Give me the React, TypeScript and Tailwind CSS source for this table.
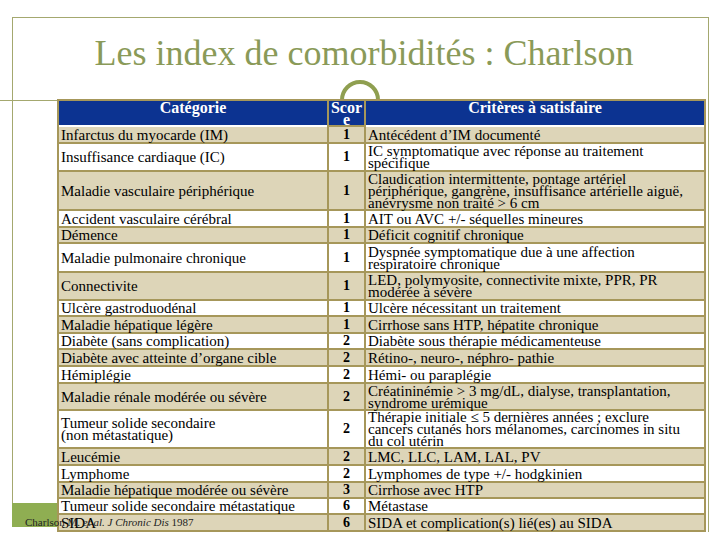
import React from "react";

type Row = {
  cat: string[];
  score: string;
  crit: string[];
  h: string;
  bg: string;
};

const beige = "bg-[#ddd5b8]";
const white = "bg-white";

const rows: Row[] = [
  { cat: ["Infarctus du myocarde (IM)"], score: "1", crit: ["Antécédent d’IM documenté"], h: "h-[15px]", bg: beige },
  { cat: ["Insuffisance cardiaque (IC)"], score: "1", crit: ["IC symptomatique avec réponse au traitement", "spécifique"], h: "h-[26px]", bg: white },
  {
    cat: ["Maladie vasculaire périphérique"],
    score: "1",
    crit: ["Claudication intermittente, pontage artériel", "périphérique, gangrène, insuffisance artérielle aiguë,", "anévrysme non traité  > 6 cm"],
    h: "h-[37px]",
    bg: beige,
  },
  { cat: ["Accident vasculaire cérébral"], score: "1", crit: ["AIT ou AVC +/- séquelles mineures"], h: "h-[15px]", bg: white },
  { cat: ["Démence"], score: "1", crit: ["Déficit cognitif chronique"], h: "h-[14px]", bg: beige },
  { cat: ["Maladie pulmonaire chronique"], score: "1", crit: ["Dyspnée symptomatique due à une affection", "respiratoire chronique"], h: "h-[27px]", bg: white },
  { cat: ["Connectivite"], score: "1", crit: ["LED, polymyosite, connectivite mixte, PPR, PR", "modérée à sévère"], h: "h-[26px]", bg: beige },
  { cat: ["Ulcère gastroduodénal"], score: "1", crit: ["Ulcère nécessitant un traitement"], h: "h-[14px]", bg: white },
  { cat: ["Maladie hépatique légère"], score: "1", crit: ["Cirrhose sans HTP, hépatite chronique"], h: "h-[15px]", bg: beige },
  { cat: ["Diabète (sans complication)"], score: "2", crit: ["Diabète sous thérapie médicamenteuse"], h: "h-[14px]", bg: white },
  { cat: ["Diabète avec atteinte d’organe cible"], score: "2", crit: ["Rétino-, neuro-, néphro- pathie"], h: "h-[15px]", bg: beige },
  { cat: ["Hémiplégie"], score: "2", crit: ["Hémi- ou paraplégie"], h: "h-[15px]", bg: white },
  {
    cat: ["Maladie rénale modérée ou sévère"],
    score: "2",
    crit: ["Créatininémie > 3 mg/dL, dialyse, transplantation,", "syndrome urémique"],
    h: "h-[25px]",
    bg: beige,
  },
  {
    cat: ["Tumeur solide secondaire", "(non métastatique)"],
    score: "2",
    crit: ["Thérapie initiale ≤ 5 dernières années ; exclure", "cancers cutanés hors mélanomes, carcinomes in situ", "du col utérin"],
    h: "h-[36px]",
    bg: white,
  },
  { cat: ["Leucémie"], score: "2", crit: ["LMC, LLC, LAM, LAL, PV"], h: "h-[15px]", bg: beige },
  { cat: ["Lymphome"], score: "2", crit: ["Lymphomes de type +/- hodgkinien"], h: "h-[15px]", bg: white },
  { cat: ["Maladie hépatique modérée ou sévère"], score: "3", crit: ["Cirrhose avec HTP"], h: "h-[14px]", bg: beige },
  { cat: ["Tumeur solide secondaire métastatique"], score: "6", crit: ["Métastase"], h: "h-[14px]", bg: white },
  { cat: ["SIDA"], score: "6", crit: ["SIDA et complication(s) lié(es) au SIDA"], h: "h-[15px]", bg: beige },
];

const Lines = ({ lines }: { lines: string[] }) => (
  <div className="flex flex-col">
    {lines.map((l, i) => (
      <span key={i} className="whitespace-nowrap leading-[12px]">
        {l}
      </span>
    ))}
  </div>
);

const App = () => {
  return (
    <div className="relative w-[720px] h-[540px] overflow-hidden bg-white font-[family-name:Liberation_Serif,serif] text-black">
      {/* slide frame */}
      <div className="absolute left-[12px] top-[17px] w-[697px] h-[515px] border-t border-r border-[#a4a86f]" />
      <div className="absolute left-[12px] top-[17px] w-px h-[486px] bg-[#a4a86f]" />
      <div className="absolute left-0 top-[100px] w-[60px] h-px bg-[#a4a86f]" />
      <div className="absolute left-[12px] top-[503px] w-[45px] h-[24px] bg-[#8fae52]" />
      <svg className="absolute left-[339px] top-[77px]" width="42" height="26" viewBox="0 0 42 26">
        <circle cx="21" cy="23" r="18" fill="none" stroke="#8f9f50" strokeWidth="4" />
      </svg>

      <div className="relative">
        <div className="h-[99px] pt-[35px] pl-[8px] text-center">
          <h1 className="text-[36px] leading-[36px] text-[#8a9a58]">Les index de comorbidités : Charlson</h1>
        </div>

        <div className="ml-[57px] w-[649px] grid grid-cols-[268px_35px_338px] gap-[2px] p-[2px] bg-[#a6975a] text-[15px]">
          <div className="h-[26px] -mb-[2px] border-b-2 border-white bg-[#0c3391] text-white font-bold text-[16px] leading-[12px] text-center pt-[1px]">
            Catégorie
          </div>
          <div className="h-[24px] bg-[#0c3391] text-white font-bold text-[16px] leading-[12px] text-center break-all pt-[1px]">
            Score
          </div>
          <div className="h-[26px] -mb-[2px] border-b-2 border-white bg-[#0c3391] text-white font-bold text-[16px] leading-[12px] text-center pt-[1px]">
            Critères à satisfaire
          </div>
          {rows.map((r, i) => (
            <React.Fragment key={i}>
              <div className={`${r.h} ${r.bg} flex items-center px-[2px]`}>
                <Lines lines={r.cat} />
              </div>
              <div className={`${r.h} ${r.bg} flex items-center justify-center font-bold text-[14px] leading-[12px]`}>
                {r.score}
              </div>
              <div className={`${r.h} ${r.bg} flex items-center px-[2px]`}>
                <Lines lines={r.crit} />
              </div>
            </React.Fragment>
          ))}
        </div>
      </div>

      <div className="absolute left-[25px] top-[516px] text-[11px] leading-[12px] text-[#222]">
        Charlson M. <i>et al.</i> <i>J Chronic Dis</i> 1987
      </div>
    </div>
  );
};

export default App;
